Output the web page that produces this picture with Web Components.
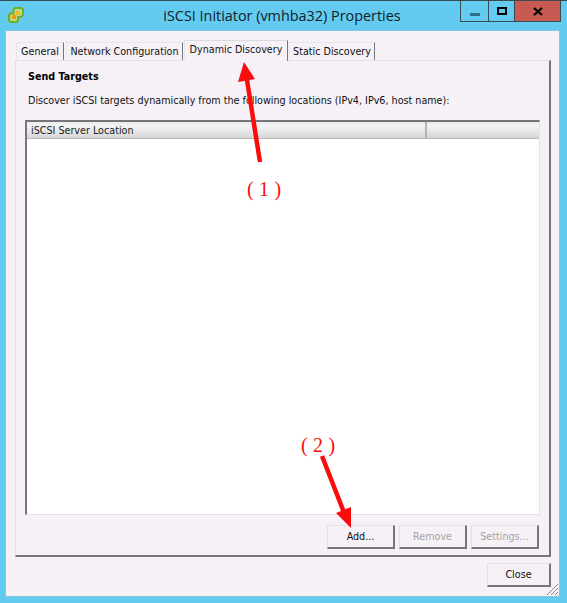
<!DOCTYPE html>
<html>
<head>
<meta charset="utf-8">
<title>iSCSI Initiator (vmhba32) Properties</title>
<style>
  html, body { margin: 0; padding: 0; background: #63cbef; }
  body { width: 567px; height: 603px; overflow: hidden; font: 9.6px "DejaVu Sans", sans-serif; color: #000; }
</style>
</head>
<body>
<prop-window caption="iSCSI Initiator (vmhba32) Properties">
  <tab-strip>
    <tab-item style="width:48px">General</tab-item>
    <tab-item style="width:117px;margin-left:2px">Network Configuration</tab-item>
    <tab-item active style="width:104px;margin-left:1px">Dynamic Discovery</tab-item>
    <tab-item style="width:86px;margin-left:1px">Static Discovery</tab-item>
  </tab-strip>
  <tab-panel>
    <strong slot="heading">Send Targets</strong>
    <span slot="hint">Discover iSCSI targets dynamically from the following locations (IPv4, IPv6, host name):</span>
    <target-list slot="list" column="iSCSI Server Location"></target-list>
    <win-button slot="actions">Add...</win-button>
    <win-button slot="actions" disabled>Remove</win-button>
    <win-button slot="actions" disabled>Settings...</win-button>
  </tab-panel>
  <win-button slot="footer" wide>Close</win-button>
</prop-window>
<red-notes></red-notes>

<script>
(function () {

  const windowTemplate = document.createElement('template')
  windowTemplate.innerHTML = `
    <style>
      :host { display: flex; flex-direction: column; width: 567px; height: 603px; box-sizing: border-box; border-top: 1px solid #3c4a52; background: #63cbef; position: relative; }
      .title { display: flex; height: 30px; flex: none; position: relative; }
      .icon { position: absolute; left: 7px; top: 5px; }
      .caption { flex: 1; text-align: center; font: 14.4px "Open Sans", sans-serif; line-height: 29px; padding-right: 3px; color: #10202a; }
      .controls { position: absolute; left: 460px; top: 0; display: flex; height: 21px; border: 1px solid #3c4a52; border-top: 0; box-sizing: border-box; }
      .controls div { display: flex; align-items: center; justify-content: center; box-sizing: border-box; }
      .min { width: 28px; border-right: 1px solid #3c4a52; padding-top: 6px; }
      .max { width: 26px; border-right: 1px solid #3c4a52; }
      .close { width: 45px; background: #c75a52; }
      .client { flex: none; margin: 0 8px 0 6px; height: 565px; background: #f5f1f6; box-shadow: 0 0 0 1px #8cc4dc; padding: 9px 8px 0 9px; box-sizing: border-box; display: flex; flex-direction: column; }
      .footer { display: flex; justify-content: flex-end; margin-top: 6px; position: relative; }
      .grip { position: absolute; right: -8px; bottom: -9px; }
    </style>
    <div class="title">
      <svg class="icon" width="18" height="18" viewBox="0 0 18 18">
        <path d="M8 2h6.500L16 3.500V9l-2 2h-3v3.500L9.500 16h-6L2 14.500V9l1.500-1.500h3v-4z" fill="#b7dc8a" stroke="#74ad2a" stroke-width="2"/>
        <rect x="5" y="9" width="4" height="4" fill="#ee9a10"/>
        <rect x="9" y="5" width="4" height="4" fill="#f5b520"/>
      </svg>
      <div class="caption"></div>
      <div class="controls">
        <div class="min"><svg width="10" height="3"><rect width="10" height="3" fill="#2f6f88"/></svg></div>
        <div class="max"><svg width="10" height="8"><rect x="1" y="1" width="8" height="6" fill="none" stroke="#000" stroke-width="2"/></svg></div>
        <div class="close"><svg width="10" height="9"><path d="M1 1l8 7M9 1l-8 7" stroke="#000" stroke-width="2.200" fill="none"/></svg></div>
      </div>
    </div>
    <div class="client">
      <slot></slot>
      <div class="footer">
        <slot name="footer"></slot>
        <svg class="grip" width="13" height="13"><path d="M12 1L1 12M12 5L5 12M12 9L9 12" stroke="#8a8a8a" fill="none"/></svg>
      </div>
    </div>
  `

  class PropWindow extends HTMLElement {
    constructor() {
      super()
      this.attachShadow({mode: 'open'})
      this.shadowRoot.appendChild(windowTemplate.content.cloneNode(true))
    }

    connectedCallback () {
      this.shadowRoot.querySelector('.caption').textContent = this.getAttribute('caption')
    }
  }

  class TabStrip extends HTMLElement {
    constructor() {
      super()
      this.attachShadow({mode: 'open'})
      this.shadowRoot.innerHTML = `
        <style>
          :host { display: flex; align-items: flex-end; height: 20px; padding-left: 1px; position: relative; z-index: 1; flex: none; }
        </style>
        <slot></slot>
      `
    }
  }

  class TabItem extends HTMLElement {
    constructor() {
      super()
      this.attachShadow({mode: 'open'})
      this.shadowRoot.innerHTML = `
        <style>
          :host { display: block; box-sizing: border-box; height: 18px; text-align: center; line-height: 17px; white-space: nowrap; border: 1px solid #e9e6ea; border-bottom: 0; border-right: 1px solid #77757a; background: #f5f1f6; color: #111; }
          :host([active]) { height: 21px; margin-bottom: -1px; line-height: 17px; border-top: 1px solid #dcdade; border-left: 1px solid #e9e6ea; }
        </style>
        <slot></slot>
      `
    }
  }

  class TabPanel extends HTMLElement {
    constructor() {
      super()
      this.attachShadow({mode: 'open'})
      this.shadowRoot.innerHTML = `
        <style>
          :host { display: flex; flex-direction: column; box-sizing: border-box; height: 497px; flex: none; padding: 9px 10px 6px 9px; border: 1px solid #e4e1e6; border-right: 2px solid #77757a; border-bottom: 2px solid #77757a; }
          .heading { font-weight: bold; line-height: 13px; height: 13px; margin-left: 3px; }
          .hint { margin: 11px 0 0 3px; height: 13px; line-height: 13px; white-space: nowrap; color: #111; }
          .list { margin: 13px -1px 0 0; flex: 1; display: flex; min-height: 0; }
          .actions { display: flex; justify-content: flex-end; gap: 4px; margin-top: 10px; }
        </style>
        <div class="heading"><slot name="heading"></slot></div>
        <div class="hint"><slot name="hint"></slot></div>
        <div class="list"><slot name="list"></slot></div>
        <div class="actions"><slot name="actions"></slot></div>
      `
    }
  }

  class TargetList extends HTMLElement {
    constructor() {
      super()
      this.attachShadow({mode: 'open'})
      this.shadowRoot.innerHTML = `
        <style>
          :host { display: flex; flex-direction: column; flex: 1; box-sizing: border-box; background: #fff; border: 1px solid #e4e1e6; border-top: 2px solid #77757a; border-left: 2px solid #77757a; }
          .head { display: flex; height: 17px; box-sizing: border-box; background: linear-gradient(#ebebeb, #f4f4f4 25%, #d6d6d6); border-bottom: 1px solid #b9b9b9; color: #222; }
          .col { line-height: 17px; padding-left: 4px; flex: 1; }
          .col + .col { flex: none; width: 112px; border-left: 2px solid #b4b4b4; padding: 0; }
        </style>
        <div class="head"><div class="col"></div><div class="col"></div></div>
      `
    }

    connectedCallback () {
      this.shadowRoot.querySelector('.col').textContent = this.getAttribute('column')
    }
  }

  class WinButton extends HTMLElement {
    constructor() {
      super()
      this.attachShadow({mode: 'open'})
      this.shadowRoot.innerHTML = `
        <style>
          :host { display: block; box-sizing: border-box; width: 68px; height: 24px; line-height: 22px; text-align: center; background: #f5f1f6; border: 1px solid #e4e1e6; border-right: 2px solid #77757a; border-bottom: 2px solid #77757a; color: #111; }
          :host([disabled]) { color: #a4a2a6; }
          :host([wide]) { width: 64px; }
        </style>
        <slot></slot>
      `
    }
  }

  // the two callouts drawn over the dialog
  class RedNotes extends HTMLElement {
    constructor() {
      super()
      this.attachShadow({mode: 'open'})
      this.shadowRoot.innerHTML = `
        <style>
          :host { display: block; position: absolute; left: 0; top: 0; width: 567px; height: 603px; pointer-events: none; }
          svg { position: absolute; left: 0; top: 0; }
          span { position: absolute; font: 20px "Liberation Serif", serif; color: #fa0c0c; white-space: pre; line-height: 22px; letter-spacing: 0.2px; }
        </style>
        <svg width="567" height="603">
          <path d="M260 162L247 80" stroke="#fa0c0c" stroke-width="4.500" fill="none"/>
          <path d="M244 62L238 82L255 79z" fill="#fa0c0c"/>
          <path d="M322 456L345 515" stroke="#fa0c0c" stroke-width="4.500" fill="none"/>
          <path d="M351 528L336 513L351 507z" fill="#fa0c0c"/>
        </svg>
        <span style="left:247px;top:178px">( 1 )</span>
        <span style="left:301px;top:434px">( 2 )</span>
      `
    }
  }

  window.customElements.define('prop-window', PropWindow)
  window.customElements.define('tab-strip', TabStrip)
  window.customElements.define('tab-item', TabItem)
  window.customElements.define('tab-panel', TabPanel)
  window.customElements.define('target-list', TargetList)
  window.customElements.define('win-button', WinButton)
  window.customElements.define('red-notes', RedNotes)
})()
</script>
</body>
</html>
